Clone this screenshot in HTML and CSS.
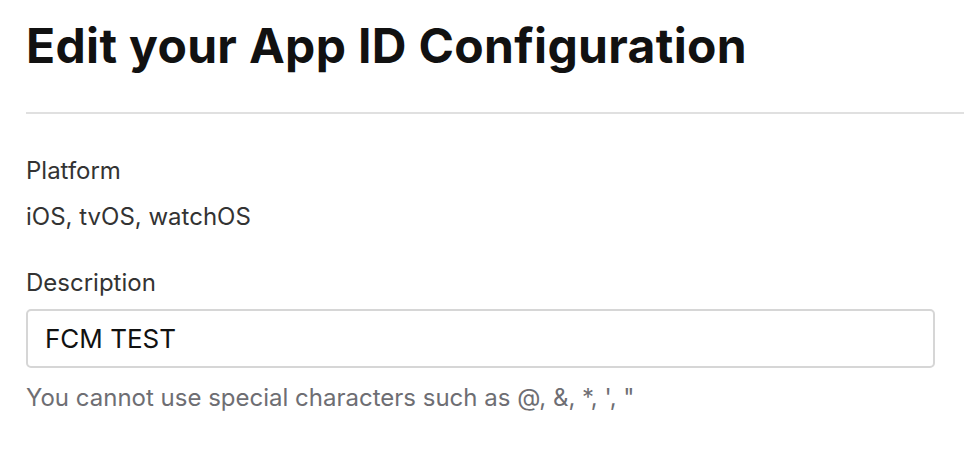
FILE: index.html
```html
<!DOCTYPE html>
<html lang="en">
<head>
<meta charset="utf-8">
<title>Edit your App ID Configuration</title>
<link rel="stylesheet" href="styles.css">
</head>
<body>
<main class="page">
  <h1 class="title">Edit your App ID Configuration</h1>
  <hr class="divider">
  <section class="field">
    <div class="label">Platform</div>
    <div class="value">iOS, tvOS, watchOS</div>
  </section>
  <section class="field field-desc">
    <label class="label" for="desc">Description</label>
    <input class="input" id="desc" type="text" value="FCM TEST">
    <p class="help">You cannot use special characters such as @, &amp;, *, ', "</p>
  </section>
</main>
</body>
</html>
```
FILE: styles.css
```css
html, body {
  margin: 0;
  padding: 0;
  background: #ffffff;
}

body {
  font-family: Inter, "Noto Sans", "Liberation Sans", sans-serif;
  color: #333333;
}

.page {
  padding: 18px 0 0 26px;
}

.title {
  margin: 0;
  font-size: 48px;
  line-height: 56px;
  font-weight: 700;
  letter-spacing: 0.33px;
  color: #111111;
}

.divider {
  margin: 38px 0 0 0;
  border: 0;
  height: 2px;
  background: #e0e0e0;
}

.field {
  display: flex;
  flex-direction: column;
}

.label {
  display: block;
  margin-top: 43px;
  font-size: 24px;
  line-height: 28px;
  color: #333333;
}

.value {
  margin-top: 18px;
  font-size: 24px;
  line-height: 28px;
  color: #333333;
}

.field-desc .label {
  margin-top: 38px;
}

.input {
  box-sizing: border-box;
  margin: 12px 29px 0 0;
  height: 59px;
  padding: 0 17px;
  border: 2px solid #d6d6d6;
  border-radius: 5px;
  font-family: inherit;
  font-size: 26px;
  color: #111111;
  background: #ffffff;
  outline: none;
}

.help {
  margin: 16px 0 0 0;
  font-size: 24px;
  line-height: 28px;
  color: #6e6e73;
}
```
